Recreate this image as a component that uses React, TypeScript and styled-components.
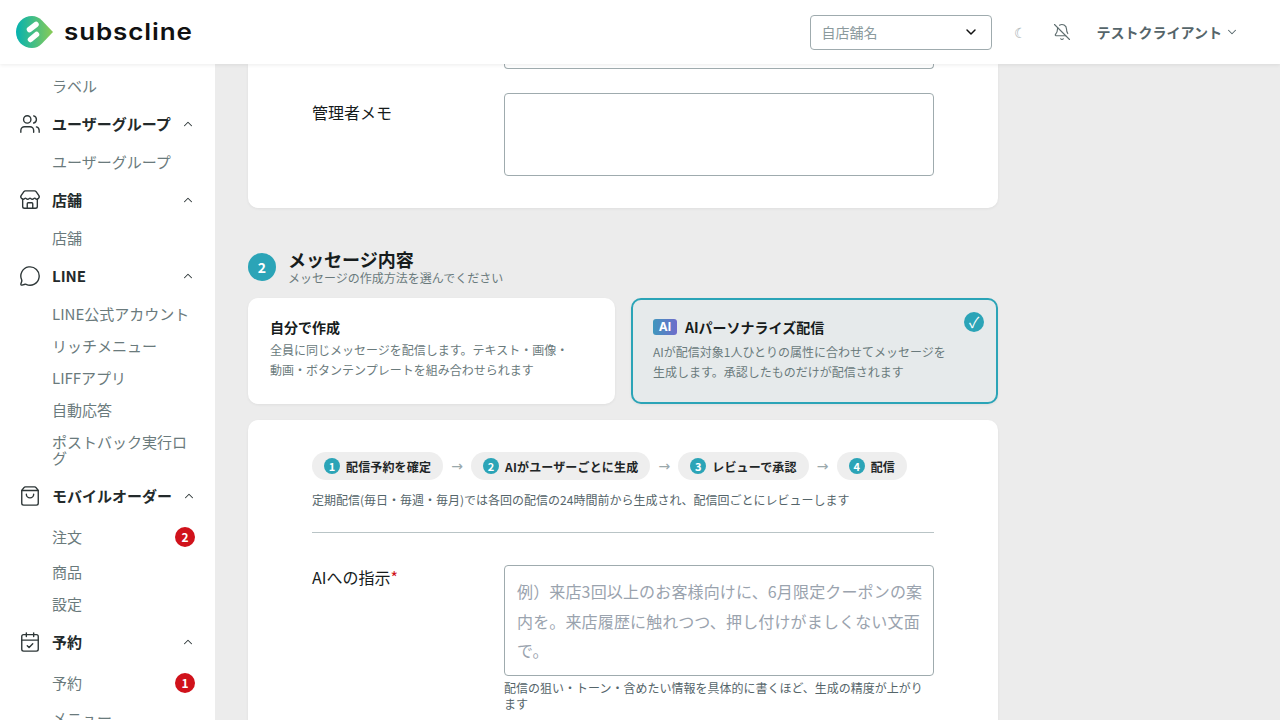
import React from "react";
import styled, { createGlobalStyle } from "styled-components";
import { BellOff, CalendarCheck, ChevronDown, ChevronUp, MessageCircle, ShoppingBag, Store, Users } from "lucide-react";

const FONT = `"Noto Sans CJK JP", "Noto Sans", sans-serif`;
const TEAL = "#2ba4b7";

const Global = createGlobalStyle`
  html, body { margin: 0; padding: 0; height: 720px; overflow: hidden; background: #ececec; }
  body { font-family: ${FONT}; color: #1a1f1f; }
  * { box-sizing: border-box; }
`;

const Page = styled.div`
  width: 1280px;
  height: 720px;
  display: flex;
  flex-direction: column;
  overflow: hidden;
`;
const Header = styled.header`
  position: relative;
  z-index: 5;
  height: 64px;
  flex: none;
  background: #fff;
  box-shadow: 0 1px 4px rgba(0, 0, 0, 0.08);
  display: flex;
  align-items: center;
  padding-left: 16px;
`;
const Logo = styled.div`
  display: flex;
  align-items: center;
  gap: 11px;
`;
const LogoWord = styled.span`
  display: inline-block;
  font-family: "Inter", sans-serif;
  font-size: 23px;
  font-weight: 600;
  letter-spacing: 0.8px;
  line-height: 32px;
  color: #111;
  transform: scaleX(1.13);
  transform-origin: left center;
`;
const HeaderRight = styled.div`
  margin-left: auto;
  display: flex;
  align-items: center;
  padding-right: 41px;
`;
const StoreSelect = styled.div`
  width: 182px;
  height: 35px;
  border: 1px solid #9fabae;
  border-radius: 4px;
  display: flex;
  align-items: center;
  justify-content: space-between;
  padding: 0 12px 0 11px;
  font-size: 14px;
  color: #8b9a9d;
  svg { color: #111; }
`;
const Moon = styled.span`
  width: 14px;
  margin-left: 22px;
  font-size: 14px;
  color: #a4adaf;
`;
const Bell = styled.span`
  display: flex;
  margin-left: 25px;
  color: #5d6c6e;
`;
const UserName = styled.span`
  display: flex;
  align-items: center;
  gap: 3px;
  margin-left: 26px;
  font-size: 14px;
  font-weight: 700;
  color: #55656a;
`;
const Body = styled.div`
  flex: 1;
  min-height: 0;
  display: flex;
`;
const Sidebar = styled.nav`
  width: 215px;
  flex: none;
  background: #fff;
  padding: 4px 20px 0;
  overflow: hidden;
`;
const GroupHead = styled.div`
  height: 40px;
  display: flex;
  align-items: center;
  gap: 11px;
  font-size: 15px;
  font-weight: 700;
  line-height: 20px;
  color: #232a2b;
  white-space: nowrap;
  svg:first-child { color: #2d3637; flex: none; margin-left: -1px; margin-right: 0; }
`;
const GroupCaret = styled.span`
  margin-left: auto;
  display: flex;
  color: #a3adaf;
`;
const SubList = styled.div`
  padding: 2px 0 2px 32px;
`;
const SubItem = styled.div<{ $badge?: boolean }>`
  min-height: ${(p) => (p.$badge ? 38 : 32)}px;
  padding: 8px 0;
  display: flex;
  align-items: center;
  justify-content: space-between;
  font-size: 15px;
  line-height: 16px;
  color: #6a7a7c;
`;
const Badge = styled.span`
  width: 20px;
  height: 20px;
  border-radius: 50%;
  background: #d0121b;
  color: #fff;
  font-size: 12px;
  font-weight: 700;
  display: flex;
  align-items: center;
  justify-content: center;
  flex: none;
`;
const Main = styled.main`
  flex: 1;
  min-width: 0;
  padding-left: 33px;
  overflow: hidden;
`;
const Column = styled.div`
  width: 750px;
`;
const Card = styled.section<{ $clipped?: boolean }>`
  background: #fff;
  border-radius: ${(p) => (p.$clipped ? "0 0 10px 10px" : "10px")};
  box-shadow: 0 1px 3px rgba(0, 0, 0, 0.06);
  padding: ${(p) => (p.$clipped ? "0 64px 32px" : "32px 64px")};
`;
const ClippedInput = styled.div`
  margin-left: 192px;
  height: 5px;
  border: 1px solid #9fabae;
  border-top: 0;
  border-radius: 0 0 4px 4px;
`;
const Field = styled.div<{ $top: number }>`
  display: flex;
  margin-top: ${(p) => p.$top}px;
`;
const FieldLabel = styled.div<{ $offset: number }>`
  width: 192px;
  flex: none;
  padding-top: ${(p) => p.$offset}px;
  font-size: 16px;
  line-height: 24px;
  color: #161b1b;
`;
const Required = styled.span`
  color: #d0121b;
`;
const FieldBody = styled.div`
  width: 430px;
`;
const TextBox = styled.div<{ $height: number }>`
  height: ${(p) => p.$height}px;
  border: 1px solid #9fabae;
  border-radius: 4px;
  padding: 11px 8px 0 12px;
  font-size: 16px;
  letter-spacing: 0.15px;
  line-height: 29.5px;
  color: #9aa3ae;
`;
const Hint = styled.div`
  margin-top: 4px;
  font-size: 12px;
  line-height: 16px;
  color: #55656a;
`;
const SectionHead = styled.div`
  display: flex;
  align-items: center;
  gap: 12px;
  margin-top: 40px;
  height: 50px;
  padding-bottom: 12px;
`;
const StepCircle = styled.span`
  width: 28px;
  height: 28px;
  border-radius: 50%;
  background: ${TEAL};
  color: #fff;
  font-size: 14px;
  font-weight: 700;
  display: flex;
  align-items: center;
  justify-content: center;
`;
const SectionTitle = styled.div`
  font-size: 18px;
  font-weight: 700;
  line-height: 20px;
  margin-bottom: 2px;
  color: #171c1c;
`;
const SectionSub = styled.div`
  font-size: 12px;
  line-height: 14px;
  color: #6a7a7c;
`;
const Choices = styled.div`
  display: grid;
  grid-template-columns: 367px 367px;
  gap: 16px;
`;
const Choice = styled.div<{ $on?: boolean }>`
  position: relative;
  height: 106px;
  border-radius: 10px;
  background: ${(p) => (p.$on ? "#e6eaeb" : "#fff")};
  border: ${(p) => (p.$on ? `2px solid ${TEAL}` : "0")};
  padding: ${(p) => (p.$on ? "15px 20px" : "17px 22px")};
  box-shadow: 0 1px 3px rgba(0, 0, 0, 0.06);
`;
const ChoiceTitle = styled.div`
  display: flex;
  align-items: center;
  gap: 8px;
  font-size: 14px;
  font-weight: 700;
  line-height: 24px;
  color: #171c1c;
`;
const AiTag = styled.span`
  width: 24px;
  height: 16px;
  border-radius: 3px;
  background: linear-gradient(90deg, #3f97bd, #6f6ccb);
  color: #fff;
  font-size: 12px;
  font-weight: 700;
  font-family: "Inter", sans-serif;
  line-height: 16px;
  text-align: center;
`;
const ChoiceText = styled.div<{ $gap: number }>`
  margin-top: ${(p) => p.$gap}px;
  font-size: 12px;
  line-height: 20px;
  color: #6a7a7c;
  width: 300px;
`;
const CheckMark = styled.span`
  position: absolute;
  top: 12px;
  right: 12px;
  width: 20px;
  height: 20px;
  border-radius: 50%;
  background: ${TEAL};
  color: #fff;
  font-size: 15px;
  line-height: 20px;
  display: flex;
  align-items: center;
  justify-content: center;
`;
const FlowCard = styled(Card)`
  margin-top: 16px;
`;
const Flow = styled.div`
  display: flex;
  align-items: center;
  gap: 8px;
`;
const Pill = styled.span`
  height: 28px;
  border-radius: 14px;
  background: #eeeeee;
  padding: 0 12px;
  display: flex;
  align-items: center;
  gap: 6px;
  font-size: 12px;
  letter-spacing: 0.15px;
  font-weight: 700;
  color: #1f2627;
  white-space: nowrap;
`;
const PillNum = styled.span`
  width: 16px;
  height: 16px;
  border-radius: 50%;
  background: ${TEAL};
  color: #fff;
  font-size: 11px;
  font-weight: 700;
  letter-spacing: 0;
  display: flex;
  align-items: center;
  justify-content: center;
`;
const Arrow = styled.span`
  width: 12px;
  font-size: 14px;
  color: #9aa8ab;
  font-family: "DejaVu Sans", sans-serif;
  text-align: center;
`;
const FlowNote = styled.div`
  margin-top: 10px;
  font-size: 12px;
  line-height: 20px;
  color: #55656a;
`;
const Divider = styled.hr`
  margin: 22px 0 0;
  border: 0;
  border-top: 1px solid #b9c4c6;
`;

const groups = [
  { icon: Users, title: "ユーザーグループ", items: [{ t: "ユーザーグループ" }] },
  { icon: Store, title: "店舗", items: [{ t: "店舗" }] },
  {
    icon: MessageCircle,
    title: "LINE",
    items: [{ t: "LINE公式アカウント" }, { t: "リッチメニュー" }, { t: "LIFFアプリ" }, { t: "自動応答" }, { t: "ポストバック実行ログ" }],
  },
  { icon: ShoppingBag, title: "モバイルオーダー", items: [{ t: "注文", b: 2 }, { t: "商品" }, { t: "設定" }] },
  { icon: CalendarCheck, title: "予約", items: [{ t: "予約", b: 1 }, { t: "メニュー" }] },
];

const steps = ["配信予約を確定", "AIがユーザーごとに生成", "レビューで承認", "配信"];

export default function App() {
  return (
    <Page>
      <Global />
      <Header>
        <Logo>
          <svg width="37" height="32" viewBox="0 0 37 32" aria-hidden="true">
            <defs>
              <linearGradient id="lg" x1="0" y1="0" x2="1" y2="0">
                <stop offset="0" stopColor="#05b2b0" />
                <stop offset="1" stopColor="#8acb55" />
              </linearGradient>
            </defs>
            <path d="M16 0C20 0 23 1.500 26 4.500L37 16 26 27.500C23 30.500 20 32 16 32 7 32 0 25 0 16 0 7 7 0 16 0Z" fill="url(#lg)" />
            <path d="M13.500 13.500L20 8.500" stroke="#fff" strokeWidth="5.500" strokeLinecap="round" fill="none" />
            <path d="M20.500 18.500L14.500 23.500" stroke="#fff" strokeWidth="5.500" strokeLinecap="round" fill="none" />
          </svg>
          <LogoWord>subscline</LogoWord>
        </Logo>
        <HeaderRight>
          <StoreSelect>
            自店舗名
            <ChevronDown size={16} strokeWidth={2.2} />
          </StoreSelect>
          <Moon>☾</Moon>
          <Bell>
            <BellOff size={18} strokeWidth={1.5} />
          </Bell>
          <UserName>
            テストクライアント
            <ChevronDown size={14} strokeWidth={1.8} />
          </UserName>
        </HeaderRight>
      </Header>
      <Body>
        <Sidebar>
          <SubList>
            <SubItem>ラベル</SubItem>
          </SubList>
          {groups.map((g) => (
            <div key={g.title}>
              <GroupHead>
                <g.icon size={22} strokeWidth={1.5} />
                {g.title}
                <GroupCaret>
                  <ChevronUp size={14} strokeWidth={1.8} />
                </GroupCaret>
              </GroupHead>
              <SubList>
                {g.items.map((i: { t: string; b?: number }) => (
                  <SubItem key={i.t} $badge={!!i.b}>
                    {i.t}
                    {i.b ? <Badge>{i.b}</Badge> : null}
                  </SubItem>
                ))}
              </SubList>
            </div>
          ))}
        </Sidebar>
        <Main>
          <Column>
            <Card $clipped>
              <ClippedInput />
              <Field $top={24}>
                <FieldLabel $offset={7}>管理者メモ</FieldLabel>
                <FieldBody>
                  <TextBox $height={83} />
                </FieldBody>
              </Field>
            </Card>
            <SectionHead>
              <StepCircle>2</StepCircle>
              <div>
                <SectionTitle>メッセージ内容</SectionTitle>
                <SectionSub>メッセージの作成方法を選んでください</SectionSub>
              </div>
            </SectionHead>
            <Choices>
              <Choice>
                <ChoiceTitle>自分で作成</ChoiceTitle>
                <ChoiceText $gap={1}>
                  全員に同じメッセージを配信します。テキスト・画像・動画・ボタンテンプレートを組み合わせられます
                </ChoiceText>
              </Choice>
              <Choice $on>
                <ChoiceTitle>
                  <AiTag>AI</AiTag>
                  AIパーソナライズ配信
                </ChoiceTitle>
                <ChoiceText $gap={3}>AIが配信対象1人ひとりの属性に合わせてメッセージを生成します。承認したものだけが配信されます</ChoiceText>
                <CheckMark>✓</CheckMark>
              </Choice>
            </Choices>
            <FlowCard>
              <Flow>
                {steps.map((s, i) => (
                  <React.Fragment key={s}>
                    {i > 0 && <Arrow>→</Arrow>}
                    <Pill>
                      <PillNum>{i + 1}</PillNum>
                      {s}
                    </Pill>
                  </React.Fragment>
                ))}
              </Flow>
              <FlowNote>定期配信(毎日・毎週・毎月)では各回の配信の24時間前から生成され、配信回ごとにレビューします</FlowNote>
              <Divider />
              <Field $top={32}>
                <FieldLabel $offset={0}>
                  AIへの指示<Required>*</Required>
                </FieldLabel>
                <FieldBody>
                  <TextBox $height={111}>
                    例）来店3回以上のお客様向けに、6月限定クーポンの案内を。来店履歴に触れつつ、押し付けがましくない文面で。
                  </TextBox>
                  <Hint>配信の狙い・トーン・含めたい情報を具体的に書くほど、生成の精度が上がります</Hint>
                </FieldBody>
              </Field>
            </FlowCard>
          </Column>
        </Main>
      </Body>
    </Page>
  );
}
